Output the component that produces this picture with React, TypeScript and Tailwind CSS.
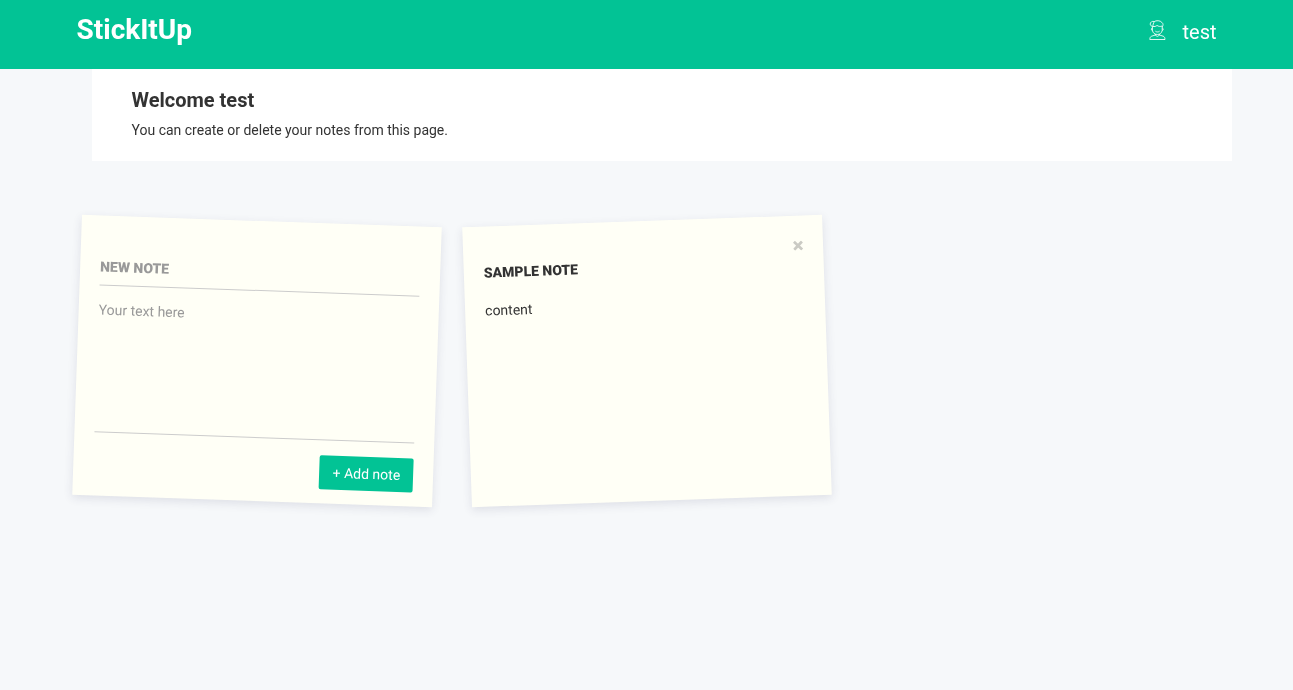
function UserIcon() {
  return (
    <svg className="h-[21px] w-[17px]" viewBox="0 0 17 21" fill="none" stroke="white" strokeOpacity="0.9" strokeWidth="0.95">
      <path d="M5.2 1.6C7 .3 11.4 .3 12.8 2.4C14.4 3.4 14.2 5.4 13.4 6.8" />
      <path d="M5.2 1.5C3.2 .9 1.2 2.2 1.2 4C1.3 5.4 2.2 6.2 3.4 6.2" />
      <path d="M5.4 1.6C4.2 3.2 4 5 3.8 7M3.8 6.4C5.4 6.8 7 6.4 8 5.4C9.4 6.5 11.3 6.8 13.2 6" />
      <path d="M3.4 6.4V10.5C3.9 13 5.9 14.5 8.4 14.5C10.9 14.5 12.7 13 13.2 10.5V6.4" />
      <path d="M3.2 8C2 8.4 2.2 10.4 3.5 10.5M13.4 8C14.6 8.4 14.4 10.4 13.1 10.5M6.4 11.2C7.6 12.2 9.4 12.2 10.6 11.2" />
      <path d="M6.4 14V15L2.6 16.2C1.2 16.8 .9 17.8 .8 19.5H16C15.9 17.8 15.6 16.8 14.2 16.2L10.4 15V14M6.4 15C7.3 16.8 9.5 16.8 10.4 15" />
    </svg>
  );
}

const noteClass =
  "h-[280px] w-[360px] bg-[#fffff6] px-5 shadow-[0_3px_10px_rgba(50,50,93,0.12)]";

export default function App() {
  return (
    <div className="min-h-screen bg-[#f6f8fa] font-['Roboto',sans-serif] text-[#333]">
      <header className="h-[69px] bg-[#02c395] pl-[76px]">
        <div className="flex w-[1140.5px] items-start justify-between text-white will-change-transform">
          <h1 className="mt-[10px] pl-[0.5px] text-[28px] leading-[40px] font-bold">StickItUp</h1>
          <div className="mt-5 flex items-start gap-4">
            <UserIcon />
            <span className="text-[20px] leading-6">test</span>
          </div>
        </div>
      </header>
      <section className="ml-[92px] h-[92px] w-[1140px] bg-white">
        <div className="px-[39.5px] pt-[18px] will-change-transform">
          <h2 className="text-[20px] leading-[26px] font-bold">Welcome test</h2>
          <p className="mt-[7px] text-[14px] leading-5">You can create or delete your notes from this page.</p>
        </div>
      </section>
      <main className="flex gap-[30px] pt-[60px] pl-[77px] will-change-transform">
        <form className={`${noteClass} rotate-2 pt-[34px]`} onSubmit={(e) => e.preventDefault()}>
          <input
            className="block h-9 w-full border-b border-[#ccc] pb-px text-[14px] font-black uppercase outline-none placeholder:text-[#999]"
            placeholder="New note"
          />
          <textarea
            className="block h-[147px] w-full resize-none border-b border-[#ccc] pt-[14.4px] text-[14px] leading-5 outline-none placeholder:text-[#999]"
            placeholder="Your text here"
          />
          <button className="mt-[15px] -mr-[0.4px] ml-auto block h-[34px] w-[94px] rounded-[2px] bg-[#02c395] text-[14px] text-white">
            + Add note
          </button>
        </form>
        <article className={`${noteClass} -rotate-2 pt-5`}>
          <button className="-mr-[1.5px] ml-auto flex h-5 w-[14px] items-center justify-center" aria-label="Delete note">
            <svg className="h-[10px] w-[10px]" viewBox="0 0 10 10" stroke="#cbcbc4" strokeWidth="2.7">
              <path d="M1 1L9 9M9 1L1 9" />
            </svg>
          </button>
          <h3 className="-mt-[3.8px] text-[14px] leading-5 font-black uppercase">Sample note</h3>
          <p className="mt-[18px] text-[14px] leading-5">content</p>
        </article>
      </main>
    </div>
  );
}
